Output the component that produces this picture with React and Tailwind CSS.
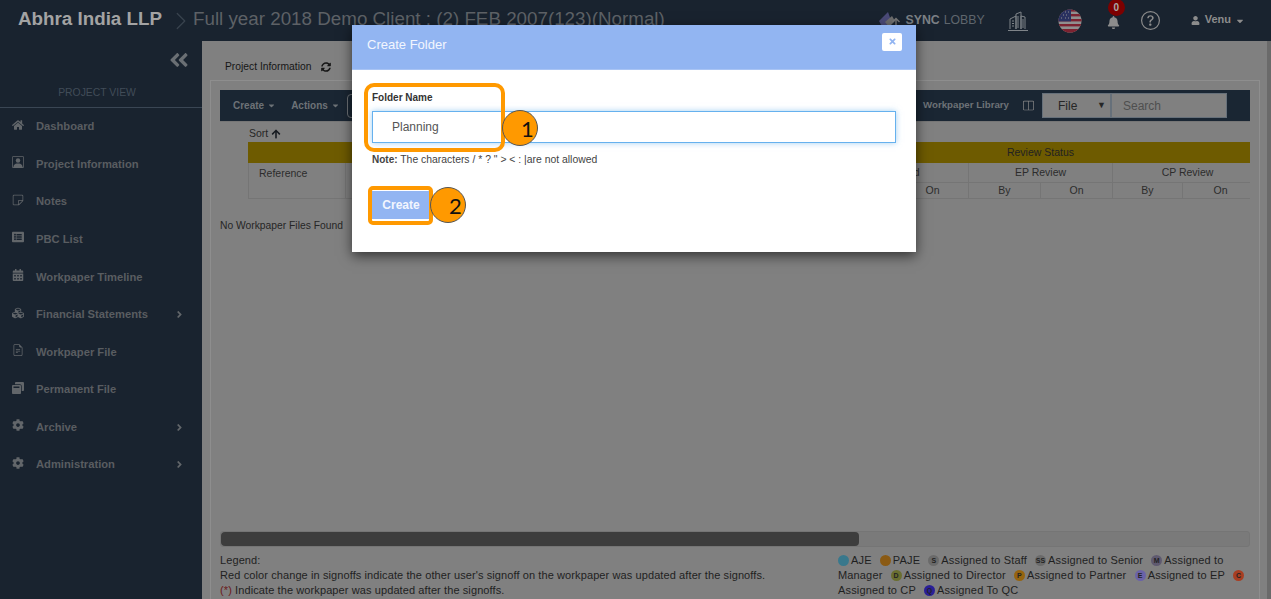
import {
  FaAngleDoubleLeft,
  FaAngleRight,
  FaArrowUp,
  FaBell,
  FaCalendarAlt,
  FaCaretDown,
  FaCog,
  FaCubes,
  FaHome,
  FaListAlt,
  FaSyncAlt,
  FaTimes,
  FaUser,
  FaWindowRestore,
} from "react-icons/fa";
import {
  BsChevronRight,
  BsFileEarmarkText,
  BsLayoutSplit,
  BsPersonSquare,
  BsQuestionCircle,
  BsSticky,
} from "react-icons/bs";

const NAV_ITEMS = [
  { name: "Dashboard", icon: FaHome },
  { name: "Project Information", icon: BsPersonSquare },
  { name: "Notes", icon: BsSticky },
  { name: "PBC List", icon: FaListAlt },
  { name: "Workpaper Timeline", icon: FaCalendarAlt },
  { name: "Financial Statements", icon: FaCubes, more: true },
  { name: "Workpaper File", icon: BsFileEarmarkText },
  { name: "Permanent File", icon: FaWindowRestore },
  { name: "Archive", icon: FaCog, more: true },
  { name: "Administration", icon: FaCog, more: true },
];

function Flag() {
  return (
    <svg width="24" height="24" viewBox="0 0 24 24">
      <defs>
        <clipPath id="flag-round">
          <circle cx="12" cy="12" r="11.5" />
        </clipPath>
      </defs>
      <g clipPath="url(#flag-round)">
        <rect width="24" height="24" fill="#8f8f8f" />
        <rect y="0" width="24" height="2.6" fill="#7c2230" />
        <rect y="5" width="24" height="2.4" fill="#7c2230" />
        <rect y="10" width="24" height="2.4" fill="#7c2230" />
        <rect y="15" width="24" height="2.4" fill="#7c2230" />
        <rect y="20" width="24" height="4" fill="#7c2230" />
        <rect width="13" height="12.4" fill="#2a3160" />
        <path d="M3 3h1M7 3h1M10 3h1M5 6h1M8 6h1M3 9h1M7 9h1M10 9h1" stroke="#8f8f8f" strokeWidth="1.2" />
      </g>
    </svg>
  );
}

function Building() {
  return (
    <svg width="22" height="20" viewBox="0 0 22 20" fill="none" stroke="#7f8489" strokeWidth="1">
      <path d="M1 19.5h20" />
      <path d="M3 18V8l6-3v13" />
      <path d="M9 18V3l5-2v17" />
      <path d="M14 18V5l4 1v12" />
      <path d="M5 10h2M5 12.5h2M5 15h2M11 5v12M16 8v9" />
    </svg>
  );
}

function SyncLogo() {
  return (
    <div className="flex items-center text-[12.3px]">
      <svg width="24" height="22" viewBox="0 0 24 22">
        <path d="M0 11 L9 2 L13 13 L4 18 Z" fill="#4a4a78" />
        <path d="M6 12 L13 6 L16 11 L10 17 Z" fill="#6d6d6d" />
        <path d="M17 20 V9 M13.5 12 l3.5 -3.5 l3.5 3.5" stroke="#777" strokeWidth="1.4" fill="none" />
      </svg>
      <span className="ml-[3px] font-semibold text-[#7c8085]">SYNC</span>
      <span className="ml-[4px] text-[#5f666d]">LOBBY</span>
    </div>
  );
}

function Header() {
  return (
    <header className="h-[41px] flex items-center bg-[#19232f] pl-[18px] pr-[26px]">
      <span className="text-[18.8px] font-bold text-[#a3a3a3] mb-[3px]">Abhra India LLP</span>
      <BsChevronRight className="text-[#39434e] text-[20px] ml-[9px] mr-[2px] mt-[1px]" />
      <span className="text-[18.8px] text-[#5d6166] mb-[3px]">Full year 2018 Demo Client : (2) FEB 2007(123)(Normal)</span>
      <div className="ml-auto flex items-center">
        <SyncLogo />
        <div className="ml-[22px]">
          <Building />
        </div>
        <div className="ml-[29px]">
          <Flag />
        </div>
        <div className="relative ml-[25px] mt-[4px]">
          <FaBell className="text-[#8c8c8c] text-[13px]" />
          <span className="absolute -top-[17px] left-[1px] w-[17px] h-[17px] rounded-full bg-[#7d0000] text-[#a9a9a9] text-[10px] font-bold flex items-center justify-center">
            0
          </span>
        </div>
        <BsQuestionCircle className="ml-[21px] text-[#8c8c8c] text-[19px]" />
        <FaUser className="ml-[31px] text-[#8c8c8c] text-[9px]" />
        <span className="ml-[5px] text-[11px] font-bold text-[#8c8c8c] mb-[3px]">Venu</span>
        <FaCaretDown className="ml-[4px] text-[#8c8c8c] text-[10px]" />
      </div>
    </header>
  );
}

function Sidebar() {
  return (
    <aside className="w-[202px] shrink-0 bg-[#19232f]">
      <div className="h-[30px] flex items-end justify-end pr-[12px]">
        <FaAngleDoubleLeft className="text-[#6a6f74] text-[22px]" />
      </div>
      <div className="h-[37px] border-b border-[#3a4654] flex items-end justify-center pb-[6px] pr-[8px] text-[10.4px] text-[#414c58]">
        PROJECT VIEW
      </div>
      <nav>
        {NAV_ITEMS.map((item) => (
          <div key={item.name} className="h-[37.55px] flex items-center pl-[12px] pr-[17px]">
            <span className="w-[24px] shrink-0 flex mb-[4px]">
              <item.icon className="text-[#62666a] text-[12px]" />
            </span>
            <span className="text-[11.2px] font-bold text-[#595d61]">{item.name}</span>
            {item.more && <FaAngleRight className="ml-auto text-[#62666a] text-[11px]" />}
          </div>
        ))}
      </nav>
    </aside>
  );
}

function Toolbar() {
  return (
    <div className="h-[32px] shrink-0 flex items-center bg-[#1a2633] border-b border-[#767676] pl-[13px] pr-[23px] text-[10px] font-bold text-[#6d7277]">
      <span>Create</span>
      <FaCaretDown className="ml-[3px] text-[9px]" />
      <span className="ml-[15px]">Actions</span>
      <FaCaretDown className="ml-[3px] text-[9px]" />
      <div className="ml-[7px] w-[40px] h-[24px] border border-[#6d7277] rounded" />
      <span className="ml-auto text-[9.7px]">Workpaper Library</span>
      <BsLayoutSplit className="ml-[14px] text-[11px] text-[#8a8a8a]" />
      <div className="ml-[8px] w-[69px] h-[25px] bg-[#808080] border border-[#66707a] flex items-center justify-between pl-[15px] pr-[4px] text-[12px] font-normal text-[#262626]">
        File
        <span className="text-[9px]">▼</span>
      </div>
      <div className="w-[116px] h-[25px] bg-[#808080] border border-[#66707a] flex items-center pl-[11px] text-[12px] font-normal text-[#4f4f4f]">
        Search
      </div>
    </div>
  );
}

function ReviewColumn({ title }) {
  return (
    <div className="w-[144px] shrink-0 border-r border-[#757575]">
      <div className="h-[20px] border-b border-[#757575] flex items-center justify-center">{title}</div>
      <div className="flex h-[15px]">
        <div className="flex-1 border-r border-[#757575] text-center">By</div>
        <div className="flex-1 text-center">On</div>
      </div>
    </div>
  );
}

function ReviewTable() {
  return (
    <div className="ml-[28px] text-[10.5px] text-[#2c2c2c]">
      <div className="h-[21px] bg-[#6e5b00] flex items-center justify-end pr-[176px] text-[#222]">Review Status</div>
      <div className="h-[36px] flex border-b border-l border-[#757575]">
        <div className="w-[97px] border-r border-[#757575] pl-[10px] pt-[3px]">Reference</div>
        <div className="flex-1" />
        <ReviewColumn title="Reviewed" />
        <ReviewColumn title="EP Review" />
        <div className="w-[137px] shrink-0">
          <div className="h-[20px] border-b border-[#757575] flex items-center justify-center pl-[12px]">CP Review</div>
          <div className="flex h-[15px]">
            <div className="w-[70px] border-r border-[#757575] text-center">By</div>
            <div className="flex-1 pl-[8px] text-center">On</div>
          </div>
        </div>
      </div>
    </div>
  );
}

function LegendDot({ color, label, first }) {
  return (
    <span
      className={`inline-flex align-top mt-[2px] w-[11px] h-[11px] rounded-full mr-[2px] items-center justify-center text-[7px] font-bold text-[#222] ${first ? "" : "ml-[5px]"} ${color}`}
    >
      {label}
    </span>
  );
}

function Legend() {
  return (
    <div className="mt-[6px] pb-[1px] flex justify-between text-[11px] leading-[15px] text-[#1f1f1f]">
      <div className="tracking-[0.1px]">
        <div>Legend:</div>
        <div>Red color change in signoffs indicate the other user's signoff on the workpaper was updated after the signoffs.</div>
        <div>
          <span className="text-[#6b1a1a]">(*)</span> Indicate the workpaper was updated after the signoffs.
        </div>
      </div>
      <div className="w-[412px] shrink-0 tracking-[0.15px]">
        <LegendDot first color="bg-[#39788c]" />AJE{" "}
        <LegendDot color="bg-[#8a5a14]" />PAJE{" "}
        <LegendDot color="bg-[#6a6a6a]" label="S" />Assigned to Staff{" "}
        <LegendDot color="bg-[#6a6a6a]" label="SS" />Assigned to Senior{" "}
        <LegendDot color="bg-[#5f5a70]" label="M" />Assigned to Manager{" "}
        <LegendDot color="bg-[#6a6e30]" label="D" />Assigned to Director{" "}
        <LegendDot color="bg-[#96640f]" label="P" />Assigned to Partner{" "}
        <LegendDot color="bg-[#6a62a8]" label="E" />Assigned to EP{" "}
        <LegendDot color="bg-[#a83e22]" label="C" />Assigned to CP{" "}
        <LegendDot color="bg-[#2a1f96]" label="Q" />Assigned To QC
      </div>
    </div>
  );
}

function Content() {
  return (
    <main className="flex-1 min-w-0 h-[558px] overflow-hidden bg-[#808080] pl-[8px] pr-[7px] border-r-[4px] border-[#6a6a6a]">
      <div className="h-[39px] flex items-center pl-[15px] pt-[12px] text-[10.3px] text-[#161616]">
        Project Information
        <FaSyncAlt className="ml-[10px] text-[10px]" />
      </div>
      <div className="h-[519px] border-l border-t border-r border-[#8e8e8e] pl-[9px] pr-[9px] pt-[9px] flex flex-col">
        <Toolbar />
        <div className="h-[20px] pl-[29px] flex items-center pt-[3px] text-[10.5px] text-[#262626]">
          Sort
          <FaArrowUp className="ml-[3px] text-[10px] text-[#161a20]" />
        </div>
        <ReviewTable />
        <div className="mt-[19px] text-[10.3px] text-[#262626]">No Workpaper Files Found</div>
        <div className="mt-auto h-[16px] shrink-0 rounded-[3px] bg-[#7a7a7a] border border-[#757575] overflow-hidden">
          <div className="w-[638px] h-full bg-[#3d3d3d] rounded-[4px]" />
        </div>
        <Legend />
      </div>
    </main>
  );
}

function Marker({ children, className }) {
  return (
    <span
      className={`absolute w-[36px] h-[36px] rounded-full bg-[#ff9900] border border-[#555] flex items-center justify-center pl-[15px] text-[22px] text-[#111] font-['Lato',sans-serif] ${className}`}
    >
      {children}
    </span>
  );
}

function CreateFolderModal() {
  return (
    <div className="absolute left-[352px] top-[25px] w-[564px] h-[227px] bg-white shadow-[0_4px_12px_rgba(0,0,0,0.6)]">
      <div className="h-[45px] bg-[#92b5f2] flex items-center justify-between pl-[15px] pr-[14px] border-b border-[#a9c4f4]">
        <span className="mb-[4px] text-[13px] text-[#f2f6fe]">Create Folder</span>
        <button className="w-[20px] h-[18px] mb-[11px] bg-white rounded-[2px] flex items-center justify-center text-[#92b5f2]">
          <FaTimes className="text-[9px]" />
        </button>
      </div>
      <div className="pl-[20px] pr-[20px] pt-[21px]">
        <label className="block mt-[1px] text-[10px] font-bold text-[#333] leading-[12px]">Folder Name</label>
        <div className="mt-[7px] h-[32px] border border-[#66b1ee] shadow-[0_0_6px_rgba(102,175,233,0.6)] flex items-center pl-[19px] text-[12px] text-[#555]">
          Planning
        </div>
        <p className="mt-[10px] text-[10.4px] leading-[14px] text-[#444]">
          <span className="font-bold text-[10px]">Note:</span> The characters / * ? " &gt; &lt; : |are not allowed
        </p>
        <button className="mt-[24px] block w-[58px] h-[28px] bg-[#92b5f2] text-[12px] font-semibold text-[#f2f6fe]">Create</button>
      </div>
      {/* tutorial callouts drawn on top of the dialog */}
      <div className="absolute left-[12px] top-[58px] w-[141px] h-[69px] border-4 border-[#ff9900] rounded-[10px]" />
      <Marker className="left-[150px] top-[85px]">1</Marker>
      <div className="absolute left-[16px] top-[161px] w-[65px] h-[39px] border-4 border-[#ff9900] rounded-[5px]" />
      <Marker className="left-[78px] top-[162px]">2</Marker>
    </div>
  );
}

export default function App() {
  return (
    <div className="relative w-[1271px] h-[599px] overflow-hidden font-['Liberation_Sans',Arial,sans-serif]">
      <Header />
      <div className="flex">
        <Sidebar />
        <Content />
      </div>
      <CreateFolderModal />
    </div>
  );
}
